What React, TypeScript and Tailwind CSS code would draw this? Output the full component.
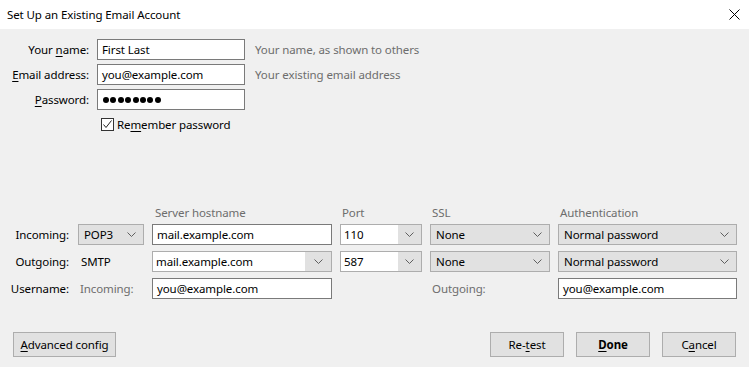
import React from "react";

const Chevron = () => (
  <svg width="9" height="5" viewBox="0 0 9 5" className="shrink-0">
    <polyline points="0.5,0.5 4.5,4.5 8.5,0.5" fill="none" stroke="#5f5f5f" strokeWidth="1" />
  </svg>
);

const U = ({ children }: { children: React.ReactNode }) => <span className="underline underline-offset-2">{children}</span>;

const TextBox = ({ value, className = "" }: { value: React.ReactNode; className?: string }) => (
  <div className={`h-[21px] border border-[#7a7a7a] bg-white flex items-center pl-[4px] text-black ${className}`}>{value}</div>
);

const Select = ({ value }: { value: string }) => (
  <div className="h-[21px] border border-[#adadad] bg-[#e1e1e1] flex items-center justify-between pl-[5px] pr-[7px] text-black">
    <span>{value}</span>
    <Chevron />
  </div>
);

const Combo = ({ value, btn = "w-[23px]" }: { value: string; btn?: string }) => (
  <div className="h-[21px] border border-[#adadad] bg-white flex items-stretch text-black">
    <div className="flex-1 flex items-center pl-[3px]">{value}</div>
    <div className={`${btn} bg-[#e1e1e1] flex items-center justify-center`}>
      <Chevron />
    </div>
  </div>
);

const Btn = ({ children, className = "" }: { children: React.ReactNode; className?: string }) => (
  <div className={`h-[25px] border border-[#adadad] bg-[#e1e1e1] flex items-center justify-center text-black ${className}`}>{children}</div>
);

export default function App() {
  const cols = "grid grid-cols-[70px_66px_180px_82px_120px_179px] gap-x-2 items-center";
  const dots = [0, 1, 2, 3, 4, 5, 6, 7];
  return (
    <div className="w-[749px] h-[367px] flex flex-col text-[11.5px] leading-[16px] tracking-[-0.1px] text-black" style={{ fontFamily: '"Noto Sans", "Segoe UI", sans-serif' }}>
      <div className="h-[29px] bg-white flex items-center justify-between pl-[7px] pr-[9px]">
        <span>Set Up an Existing Email Account</span>
        <svg width="11" height="11" viewBox="0 0 11 11">
          <path d="M0.5 0.5 L10.5 10.5 M10.5 0.5 L0.5 10.5" stroke="#000" strokeWidth="1" />
        </svg>
      </div>
      <div className="flex-1 bg-[#f0f0f0] flex flex-col">
        <div className="pt-[10px] flex flex-col gap-[4px]">
          <div className="flex items-center">
            <span className="w-[89px] text-right">Your <U>n</U>ame:</span>
            <TextBox value="First Last" className="ml-[8px] w-[148px]" />
            <span className="ml-[10px] text-[#6d6d6d]">Your name, as shown to others</span>
          </div>
          <div className="flex items-center">
            <span className="w-[89px] text-right"><U>E</U>mail address:</span>
            <TextBox value="you@example.com" className="ml-[8px] w-[148px]" />
            <span className="ml-[10px] text-[#6d6d6d]">Your existing email address</span>
          </div>
          <div className="flex items-center">
            <span className="w-[89px] text-right"><U>P</U>assword:</span>
            <TextBox
              value={
                <div className="flex gap-[1.4px] pl-[1px]" aria-label="password">
                  {dots.map((d) => (
                    <span key={d} className="w-[6px] h-[6px] rounded-full bg-black" />
                  ))}
                </div>
              }
              className="ml-[8px] w-[148px]"
            />
          </div>
          <div className="flex items-center mt-[4px] pl-[101px] h-[13px]">
            <div className="w-[13px] h-[13px] border border-[#333] bg-white flex items-center justify-center">
              <svg width="11" height="11" viewBox="0 0 11 11">
                <polyline points="1.5,5.5 4,8.5 9.5,1.5" fill="none" stroke="#222" strokeWidth="1" />
              </svg>
            </div>
            <span className="ml-[3px]">Re<U>m</U>ember password</span>
          </div>
        </div>

        <div className="mt-[74px] flex flex-col gap-[6px]">
          <div className={`${cols} h-[14px] text-[#6d6d6d] -mb-[1px]`}>
            <span />
            <span />
            <span className="pl-[3px]">Server hostname</span>
            <span className="pl-[2px]">Port</span>
            <span className="pl-[2px]">SSL</span>
            <span className="pl-[2px]">Authentication</span>
          </div>
          <div className={cols}>
            <span className="text-right pr-[1px]">Incoming:</span>
            <Select value="POP3" />
            <TextBox value="mail.example.com" className="pl-[3px]" />
            <Combo value="110" />
            <Select value="None" />
            <Select value="Normal password" />
          </div>
          <div className={cols}>
            <span className="text-right pr-[1px]">Outgoing:</span>
            <span className="pl-[3px]">SMTP</span>
            <Combo value="mail.example.com" btn="w-[26px]" />
            <Combo value="587" />
            <Select value="None" />
            <Select value="Normal password" />
          </div>
          <div className={cols}>
            <span className="text-right pr-[1px]">Username:</span>
            <span className="pl-[2px] text-[#6d6d6d]">Incoming:</span>
            <TextBox value="you@example.com" className="pl-[3px]" />
            <span />
            <span className="pl-[2px] text-[#6d6d6d]">Outgoing:</span>
            <TextBox value="you@example.com" className="pl-[3px]" />
          </div>
        </div>

        <div className="mt-auto pb-[10px] px-[13px] flex items-center">
          <Btn className="w-[103px]"><span><U>A</U>dvanced config</span></Btn>
          <div className="ml-auto flex gap-3">
            <Btn className="w-[74px]"><span>Re-<U>t</U>est</span></Btn>
            <Btn className="w-[74px] font-bold"><span><U>D</U>one</span></Btn>
            <Btn className="w-[74px]"><span>C<U>a</U>ncel</span></Btn>
          </div>
        </div>
      </div>
    </div>
  );
}
